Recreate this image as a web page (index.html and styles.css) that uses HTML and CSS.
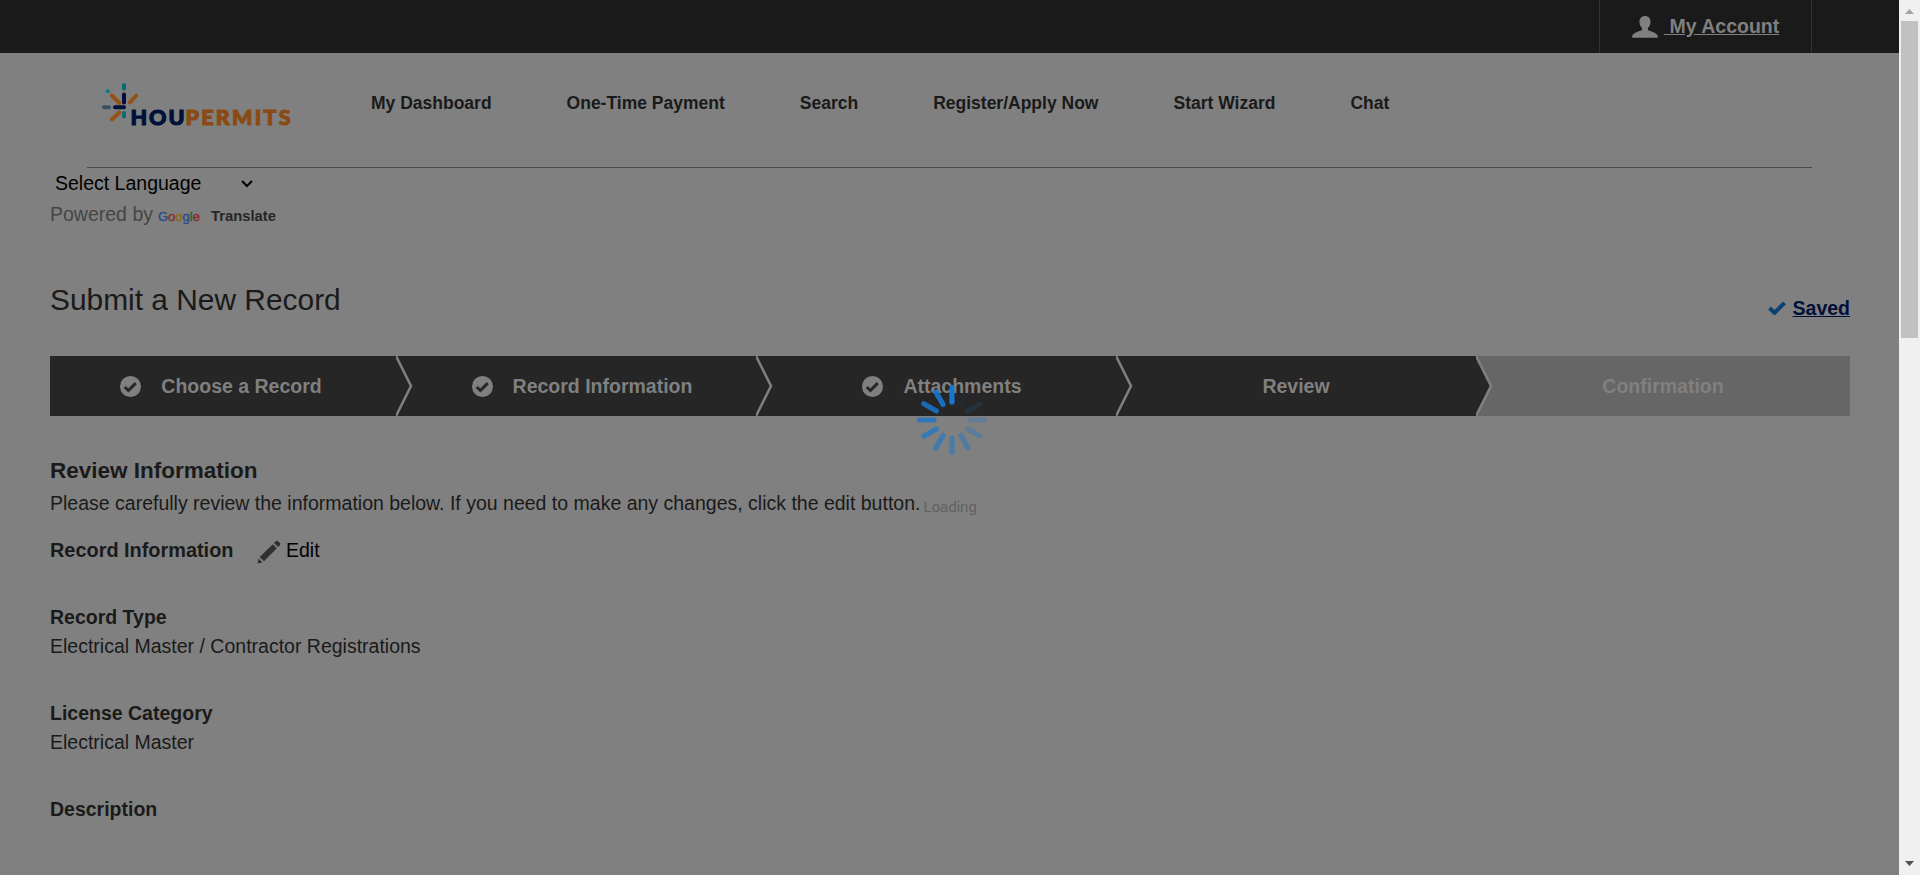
FILE: index.html
```html
<!DOCTYPE html>
<html lang="en">
<head>
<meta charset="utf-8">
<title>HouPermits</title>
<link rel="stylesheet" href="styles.css">
</head>
<body>
<div class="window">
  <div class="page">
    <div class="topbar">
      <a class="account">
        <svg class="user-icon" viewBox="0 0 26 22"><path fill="#808080" d="M13 0c3.300 0 5.500 2.200 5.500 5.800 0 2.700-1 5-2.500 6.200v2c.6 1 9.300 2.300 9.800 6.200v1.600H.2v-1.600C.7 16.300 9.400 15 10 14v-2C8.500 10.800 7.500 8.500 7.500 5.800 7.500 2.200 9.700 0 13 0z"/></svg>
        <span class="account-label">&nbsp;My Account</span>
      </a>
    </div>
    <header class="header">
      <svg class="logo" viewBox="0 0 192 48">
        <g fill="none" stroke-width="4" stroke-linecap="round">
          <path stroke="#086a75" d="M23 4v3.500M23 32v3.500"/>
          <path stroke="#00103a" d="M23 13.500v8M14 26.200h9"/>
          <path stroke="#965115" d="M10.800 14.500l7.500 7.500M35.300 14.500L29 21.300M10.800 38.500l7.500-7"/>
          <path stroke="#3d4f66" d="M3 26.200h5"/>
        </g>
        <circle cx="6.700" cy="10.300" r="2" fill="#087a88"/>
        <g class="logo-text">
          <text x="29.500" y="44" fill="#00103a" stroke="#00103a" textLength="54">HOU</text>
          <text x="84.500" y="44" fill="#8a4a14" stroke="#8a4a14" textLength="105">PERMITS</text>
        </g>
      </svg>
      <nav class="nav">
        <a>My Dashboard</a><a>One-Time Payment</a><a>Search</a><a>Register/Apply Now</a><a>Start Wizard</a><a>Chat</a>
      </nav>
    </header>
    <main class="content">
      <div class="language">Select Language
        <svg class="caret" viewBox="0 0 12 8"><path d="M1 1l5 5 5-5" fill="none" stroke="#000" stroke-width="2"/></svg>
      </div>
      <div class="powered">Powered by
        <span class="google"><i class="blue">G</i><i class="red">o</i><i class="yellow">o</i><i class="blue">g</i><i class="green">l</i><i class="red">e</i></span>
        <b class="translate">Translate</b>
      </div>
      <div class="title-row">
        <h1>Submit a New Record</h1>
        <div class="saved">
          <svg class="saved-icon" viewBox="0 0 18 14"><path d="M1.500 7l5 4.800L16.500 1.800" fill="none" stroke="#0b4270" stroke-width="4"/></svg>
          <a>Saved</a>
        </div>
      </div>
      <div class="steps">
        <div class="step first"><svg class="check" viewBox="0 0 20 20"><circle cx="10" cy="10" r="10"/><path d="M4.500 10.500l3.500 3.300 7-7"/></svg><span>Choose a Record</span><svg class="arrow" viewBox="0 0 17 60"><path d="M0 0l15 30L0 60" fill="#262626" stroke="#808080" stroke-width="2.500"/></svg></div>
        <div class="step done"><svg class="check" viewBox="0 0 20 20"><circle cx="10" cy="10" r="10"/><path d="M4.500 10.500l3.500 3.300 7-7"/></svg><span>Record Information</span><svg class="arrow" viewBox="0 0 17 60"><path d="M0 0l15 30L0 60" fill="#262626" stroke="#808080" stroke-width="2.500"/></svg></div>
        <div class="step done"><svg class="check" viewBox="0 0 20 20"><circle cx="10" cy="10" r="10"/><path d="M4.500 10.500l3.500 3.300 7-7"/></svg><span>Attachments</span><svg class="arrow" viewBox="0 0 17 60"><path d="M0 0l15 30L0 60" fill="#262626" stroke="#808080" stroke-width="2.500"/></svg></div>
        <div class="step"><span>Review</span><svg class="arrow" viewBox="0 0 17 60"><path d="M0 0l15 30L0 60" fill="#262626" stroke="#808080" stroke-width="2.500"/></svg></div>
        <div class="step last"><span>Confirmation</span></div>
      </div>
      <h2>Review Information</h2>
      <p class="intro"><span>Please carefully review the information below. If you need to make any changes, click the edit button.</span><span class="loading">Loading</span></p>
      <div class="section-head">
        <h3>Record Information</h3>
        <svg class="pencil" viewBox="0 0 24 24"><path fill="#303030" d="M.5 23.500l1-5 4 4zM2.700 17L15.800 4.300l4 4L7 21.300zM17 3.100L18.900 1.200c.6-.6 1.500-.6 2.100 0l1.900 1.900c.6.600.6 1.500 0 2.100L21 7.100z"/></svg>
        <a>Edit</a>
      </div>
      <dl>
        <div><dt>Record Type</dt><dd>Electrical Master / Contractor Registrations</dd></div>
        <div><dt>License Category</dt><dd>Electrical Master</dd></div>
        <div><dt>Description</dt></div>
      </dl>
    </main>
    <svg class="spinner" viewBox="-35 -35 70 70">
      <g stroke="#1776cf" stroke-width="5.200" stroke-linecap="round">
        <path d="M0-18v-14.500"/>
        <path d="M0-18v-14.500" transform="rotate(30)" opacity=".04"/>
        <path d="M0-18v-14.500" transform="rotate(60)" opacity=".15"/>
        <path d="M0-18v-14.500" transform="rotate(90)" opacity=".25"/>
        <path d="M0-18v-14.500" transform="rotate(120)" opacity=".34"/>
        <path d="M0-18v-14.500" transform="rotate(150)" opacity=".42"/>
        <path d="M0-18v-14.500" transform="rotate(180)" opacity=".5"/>
        <path d="M0-18v-14.500" transform="rotate(210)" opacity=".59"/>
        <path d="M0-18v-14.500" transform="rotate(240)" opacity=".67"/>
        <path d="M0-18v-14.500" transform="rotate(270)" opacity=".75"/>
        <path d="M0-18v-14.500" transform="rotate(300)" opacity=".84"/>
        <path d="M0-18v-14.500" transform="rotate(330)" opacity=".92"/>
      </g>
    </svg>
  </div>
  <div class="scrollbar">
    <svg class="sb-arrow" viewBox="0 0 9 5"><path fill="#a3a3a3" d="M0 5L4.500 0 9 5z"/></svg>
    <div class="thumb"></div>
    <svg class="sb-arrow down" viewBox="0 0 9 5"><path fill="#505050" d="M0 0h9L4.500 5z"/></svg>
  </div>
</div>
</body>
</html>
```

FILE: styles.css
```css
* { box-sizing: border-box; }
body { margin: 0; font-family: "Liberation Sans", Arial, sans-serif; font-size: 19.5px; color: #1a1a1a; overflow: hidden; }
svg { display: block; flex: none; }
h1, h2, h3, p, dl, dd, dt { margin: 0; }
.window { display: flex; height: 875px; background: #808080; }
.page { position: relative; width: 1899px; overflow: hidden; }
.topbar { height: 53px; background: #1a1a1a; display: flex; justify-content: flex-end; padding-right: 87px; }
.account { display: flex; align-items: flex-start; width: 213px; padding-left: 32px; border: solid #333; border-width: 0 1px; color: #808080; font-weight: bold; }
.user-icon { width: 26px; height: 22px; margin-top: 16px; }
.account-label { margin: 12px 0 0 6px; line-height: 28px; text-decoration: underline; white-space: nowrap; }
.header { display: flex; height: 115px; margin: 0 87px; border-bottom: 1px solid #4b4b4b; }
.logo { width: 192px; height: 48px; margin: 28px 0 0 14px; }
.logo-text { font: 900 21.5px Lato, sans-serif; stroke-width: 1.1; }
.nav { display: flex; gap: 75px; margin: 36px 0 0 78px; font-size: 17.5px; font-weight: bold; line-height: 28px; white-space: nowrap; }
.content { padding: 0 49px 0 50px; white-space: nowrap; }
.language { display: flex; align-items: center; height: 31px; padding-left: 5px; color: #000; }
.caret { width: 12px; height: 8px; margin-left: 40px; }
.powered { display: flex; align-items: baseline; height: 30px; line-height: 30px; color: #454545; }
.google { margin-left: 5px; font-size: 13px; width: 42px; -webkit-text-stroke: .4px; }
.google i { font-style: normal; }
.blue { color: #2c4c86; }
.red { color: #8a2b24; }
.yellow { color: #886a10; }
.green { color: #22663a; }
.translate { margin-left: 11px; font-size: 14.8px; color: #262626; }
.title-row { display: flex; justify-content: space-between; height: 127px; padding-top: 51px; }
h1 { font-size: 29.9px; font-weight: normal; line-height: 40px; }
.saved { display: flex; align-items: center; height: 28px; margin-top: 14px; gap: 7px; color: #00103a; font-weight: bold; text-decoration: underline; }
.saved-icon { width: 18px; height: 14px; }
.steps { display: flex; height: 60px; color: #808080; font-weight: bold; }
.step { position: relative; display: flex; align-items: center; justify-content: center; gap: 20px; width: 360px; padding-top: 1px; background: #262626; }
.step.first { width: 346px; padding-right: 4px; }
.step.done { padding-left: 12px; }
.step.last { width: 374px; background: #666; }
.check { width: 21px; height: 21px; }
.check circle { fill: #808080; }
.check path { fill: none; stroke: #262626; stroke-width: 2.800; }
.arrow { position: absolute; z-index: 1; right: -17px; top: 0; width: 17px; height: 60px; }
h2 { margin-top: 40px; font-size: 22.5px; line-height: 30px; }
.intro { display: flex; align-items: baseline; height: 34px; line-height: 34px; }
.loading { position: relative; top: 2px; margin-left: 3px; font-size: 15px; color: #606060; }
.section-head { display: flex; align-items: center; height: 34px; margin-top: 13px; color: #000; }
h3 { font-size: 19.9px; width: 207px; color: #1a1a1a; }
.pencil { width: 24px; height: 24px; margin: 3px 5px 0 0; }
dl { margin-top: 36px; }
dl div { height: 96px; line-height: 29px; }
dt { font-weight: bold; }
.spinner { position: absolute; left: 917px; top: 385px; width: 70px; height: 70px; }
.scrollbar { display: flex; flex-direction: column; align-items: center; width: 21px; background: #f0f0f0; }
.sb-arrow { width: 9px; height: 5px; margin-top: 9px; }
.thumb { width: 17px; height: 317px; margin-top: 7px; background: #c1c1c1; }
.sb-arrow.down { margin: auto 0 9px; }
```
